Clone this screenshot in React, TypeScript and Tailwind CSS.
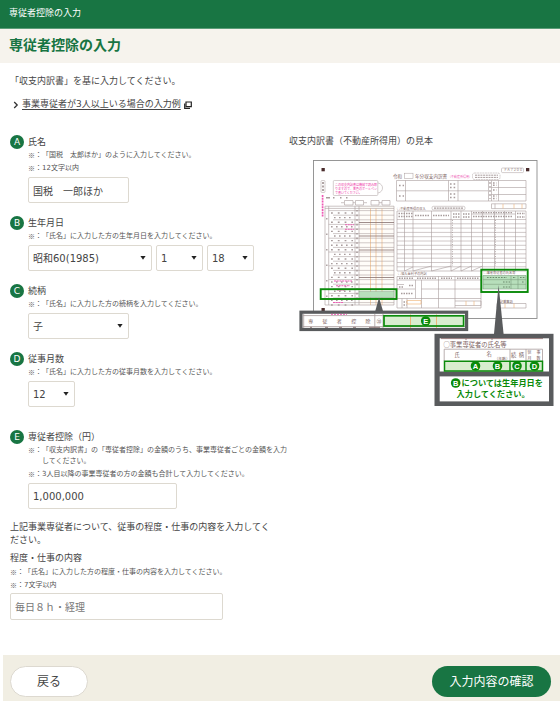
import type { ReactNode } from "react";

const relations = ["子", "配偶者", "父", "母"];
const months = ["12", "11", "10", "9", "8", "7", "6"];

const sampleFont = "'Liberation Sans', 'Noto Sans CJK JP', sans-serif";
const green = "#0a8a0a";
const line = "#a89c9c";

const mainRows = Array.from({ length: 21 }, (_, i) => 210.6 + i * 4.6);
const incomeRows = Array.from({ length: 12 }, (_, i) => 219.5 + i * 4.3);

function Badge({ children }: { children: ReactNode }) {
  return (
    <span className="flex size-3.5 shrink-0 items-center justify-center rounded-full bg-[#187543] text-[9px] leading-none text-white">
      {children}
    </span>
  );
}

function Note({ children }: { children: ReactNode }) {
  return (
    <p className="flex py-px text-[7px] leading-[11px] text-[#555]">
      <span className="w-[7px] shrink-0 font-['Noto_Sans_CJK_JP',sans-serif]">※</span>
      <span className="w-[7px] shrink-0">：</span>
      <span>{children}</span>
    </p>
  );
}

type FieldProps = {
  mark: string;
  label: string;
  htmlFor: string;
  notes: string[];
  children: ReactNode;
};

function Field({ mark, label, htmlFor, notes, children }: FieldProps) {
  return (
    <div className="flex gap-1">
      <Badge>{mark}</Badge>
      <div className="min-w-0 flex-1">
        <label htmlFor={htmlFor} className="block text-[9px] leading-[14px]">
          {label}
        </label>
        {notes.map((note) => (
          <Note key={note}>{note}</Note>
        ))}
        <div className="mt-0.5 flex gap-1">{children}</div>
      </div>
    </div>
  );
}

type SelectProps = {
  id: string;
  options: string[];
  className: string;
  label?: string;
};

function Select({ id, options, className, label }: SelectProps) {
  return (
    <div className={`relative ${className}`}>
      <select
        id={id}
        aria-label={label}
        className="block h-[26px] w-full appearance-none rounded-xs border border-[#ddd9d0] bg-white pl-1 text-[10px] text-[#444]"
      >
        {options.map((option) => (
          <option key={option}>{option}</option>
        ))}
      </select>
      <svg viewBox="0 0 6 4" className="pointer-events-none absolute top-[11px] right-1.5 h-1 w-1.5">
        <path d="M.4 0h5.2L3 3.8z" fill="#222" />
      </svg>
    </div>
  );
}

function Mark({ x, y, children }: { x: number; y: number; children: string }) {
  return (
    <g>
      <circle cx={x} cy={y} r="4.8" fill={green} />
      <text x={x} y={y + 2.7} fontSize="7.5" fontWeight="700" fill="#fff" textAnchor="middle">
        {children}
      </text>
    </g>
  );
}

function FormSample() {
  return (
    <svg
      viewBox="289 155 266 255"
      className="mt-[7px] block w-full"
      fontFamily={sampleFont}
      role="img"
      aria-label="収支内訳書の見本"
    >
      {/* paper */}
      <rect x="313.5" y="160.5" width="223.5" height="158" fill="#fff" stroke="#8c8c8c" strokeWidth="0.9" />
      <g fill="#4a2c2c">
        <rect x="321.5" y="168" width="3.3" height="3.3" />
        <rect x="526" y="168" width="3.3" height="3.3" />
        <rect x="321.5" y="308" width="3.3" height="3.3" />
      </g>

      {/* form title */}
      <g fontSize="4.6" fill="#7d6464">
        <text x="393" y="178">令和</text>
        <text x="415" y="178">年分収支内訳書</text>
        <text x="448" y="177.6" fontSize="3" fill="#ee5bb5">（不動産所得用）</text>
        <text x="504" y="171.4" fontSize="3.1">ＦＡ７２００</text>
      </g>
      <g fill="none" stroke={line} strokeWidth="0.5">
        <rect x="404.5" y="173.2" width="8.5" height="5.3" />
        <rect x="501.5" y="168" width="22" height="4.6" rx="1" />
        <rect x="472.5" y="173" width="27.5" height="6.5" rx="2" strokeDasharray="2 .6" />
        <path d="M475 175.2h23M475 177.4h23" strokeDasharray="2 .7" strokeWidth="1" />
        <rect x="321" y="180.5" width="4" height="12" rx="1" />
        <path d="M323 182v9" strokeDasharray="2 1.5" strokeWidth="1.8" />
        <rect x="333.3" y="180.5" width="44.5" height="15" rx="1" />
        <path d="M378 183c6 1 6 9 0 10" />
      </g>
      <path d="M322.6 195v22" stroke="#ee5bb5" strokeWidth="1.7" strokeDasharray="2 .8" />
      <g fontSize="3" fill="#ee3ba8">
        <text x="335" y="185.5">この収支内訳書は機械で読み取</text>
        <text x="335" y="189.5">りますので、黒色のボールペン</text>
        <text x="335" y="193.5">で書いてください。</text>
      </g>

      {/* address block */}
      <g fill="none" stroke={line} strokeWidth="0.6">
        <path d="M396.5 180.5H526v20.5H396.5zM396.5 190.8H488M405.5 180.5V201M448.5 180.5V201M458 180.5V201M488.5 180.5V201M491.5 180.5V201M498.5 180.5V201M491.5 187.5H526M491.5 194.5H526" />
        <path d="M399 185.5h5M399 196h5M450 184h6M450 187.5h6M450 194h6M450 197.5h6M493 183h4M493 185.3h4M493 190h4M493 196h4M493 198.5h4" strokeDasharray="1.6 2" strokeWidth="1.4" />
        <path d="M490 182v17" strokeDasharray="2 2" strokeWidth="1.2" />
        <path d="M326 197.7h4M333 197.7h1.5M340 197.7h1.5M346 197.7h1.5" strokeWidth="1.4" />
        <path d="M344.5 200.5h8.5v4.5h-8.5zM355.5 200.5h8v4.5h-8zM371 200.5h8v4.5h-8zM382 200.5h8v4.5h-8zM491.5 203.8H526v4.8H491.5zM495 203.8v4.8" />
        <path d="M341 202.7h3M353 202.7h2M364 202.7h3M379 202.7h3" />
      </g>

      {/* main table */}
      <rect x="359" y="206" width="35" height="99" fill="#fffdf9" />
      <g stroke="#efb070" strokeWidth="0.6">
        <path d="M370.5 208.5V305M382 208.5V305M376 208.5V305" />
        <path d="M503 204v4.5M514 204v4.5M522 204v4.5" />
      </g>
      <g fill="none" stroke={line} strokeWidth="0.6">
        <path d="M325 206.2H394V305H325zM328.7 206.2V305M355 206.2V305M359 206.2V305" />
        <path d="M325 208.4H394" />
        <path d="M326.8 218v80" strokeDasharray="1.5 14" strokeWidth="1.4" />
        <path d="M357 210v92" strokeDasharray="1.6 3" strokeWidth="1.6" />
      </g>
      {mainRows.map((y, i) => (
        <g key={y} stroke={line} fill="none">
          <path d={`M${i % 3 === 0 ? 328.7 : 333} ${y}H394`} strokeWidth="0.55" />
          <path
            d={`M${i % 4 === 1 ? 334 : 331} ${y + 2.4}H353`}
            strokeWidth="1.4"
            strokeDasharray={i % 2 ? "1.6 3.4" : "1.8 5"}
          />
        </g>
      ))}
      <path d="M359 222.5H394M359 236H394M359 250H394M359 277.5H394" stroke="#85706f" strokeWidth="0.8" />
      <path d="M345 224.7h9M345 229.3h9M334 281h18M336 285.7h14M337 290h8M333 302.5h10" stroke="#ee5bb5" strokeWidth="1.1" strokeDasharray="2 .7" />

      {/* income table */}
      <g fontSize="3.2" fill="#7d6464">
        <text x="397" y="209.5">◯不動産所得の収入</text>
        <text x="398" y="274.8">◯借入金利子の内訳</text>
        <text x="483.5" y="274">◯事業専従者の氏名等</text>
        <text x="500" y="302.5">記載事項</text>
      </g>
      <rect x="432" y="206.3" width="33" height="3.6" rx="1.5" fill="none" stroke={line} strokeWidth="0.5" />
      <path d="M434 208.1h29" stroke={line} strokeWidth="1.4" strokeDasharray="2 .7" />
      <g fill="none" stroke={line} strokeWidth="0.6">
        <path d="M397 211H526V271H397zM404.5 211V271M413 211V271M431.5 211V271M451 211V271M461 211V271M471.5 211V271M482.5 211V271M494.5 211V271M504.5 211V271M515.5 211V271M471.5 214H515.5" />
        <path d="M452.5 220v46M495.5 220v46" strokeDasharray="1 1.4" strokeWidth="0.8" />
        <path d="M398.5 213.5h14M398.5 216.5h14M415 215.5h14M433 215.5h16M453 214h7M453 217h7M463 214h7M463 217h7M473 212.7h40M473 216.5h40M517 213.5h8M517 217h8" strokeDasharray="1.5 1" strokeWidth="1.3" />
        <path d="M404.5 271l8.5-4M413 271l18.5-5M431.5 271l19.5-5M451 271l10-5M461 271l10.5-5M471.5 271l11-5" />
      </g>
      {incomeRows.map((y) => (
        <path key={y} d={`M397 ${y}H526`} stroke={line} strokeWidth="0.55" />
      ))}

      {/* lower tables */}
      <g fill="none" stroke={line} strokeWidth="0.6">
        <path d="M397 276.5H481V308H397zM397 280H481M397 284.5H404M415.5 280V298.5M421.5 280V308M438.5 276.5V308M455 276.5V308M397 289H415M397 298.5H438.5M402 298.5V308M407 298.5V308M421.5 289H481M438.5 298.5H481M455 301H481V305.5H455M497 303.5H526V308H497z" />
        <path d="M399 278.3h14M417 278.3h20M441 278.3h11M457 278.3h22M399 287h5M409 285.5h4M401 293.5h12M403.5 302h3M403.5 305h3" strokeDasharray="1.5 1" strokeWidth="1.4" />
      </g>
      <path d="M407 300.5H421V304H407zM466 301v4.5M474 301v4.5M505 303.5v4.5M514 303.5v4.5" fill="none" stroke="#efb070" strokeWidth="0.6" />

      {/* highlighted cells */}
      <rect x="359" y="291.5" width="35" height="6" fill="#b7dfbb" stroke="#89a889" strokeWidth="0.5" />
      <rect x="320.7" y="289.2" width="75.8" height="9.8" fill="none" stroke={green} strokeWidth="1.9" />
      <rect x="483" y="275.5" width="43" height="13.5" fill="#b7dfbb" />
      <path d="M483 275.5H526V289H483zM483 279.7H526M483 284.3H526M511 275.5V289M518 275.5V289" fill="none" stroke="#7da080" strokeWidth="0.6" />
      <path d="M487 277.5h20M513 277.5h3M520 277.5h5M503 282h7M503 287h7M522 282h2" stroke="#6d8a6d" strokeWidth="1.1" strokeDasharray="1.6 1.2" />
      <rect x="481.3" y="269.7" width="46.4" height="22.3" fill="none" stroke={green} strokeWidth="1.9" />

      {/* deduction call-out */}
      <path d="M379 297.5L383.3 312H375z" fill="#595b5d" />
      <rect x="301" y="312.2" width="165.6" height="17.3" fill="#fff" stroke="#595b5d" strokeWidth="3.2" />
      <path d="M303 315.6H465M303 326.6H465M303.7 314V328M374.8 314V328M383 314V328" fill="none" stroke={line} strokeWidth="0.8" />
      <path d="M331 314.4h16" stroke="#ee5bb5" strokeWidth="0.9" strokeDasharray="2 1" />
      <path d="M310 327.4h2M325 327.4h3M339 327.4h3M353 327.4h3M369 327.4h11" stroke="#8b7474" strokeWidth="0.9" />
      <g fontSize="5" fill="#7d6464" textAnchor="middle">
        <text x="310.7" y="323">専</text>
        <text x="325" y="323">従</text>
        <text x="339.3" y="323">者</text>
        <text x="353.7" y="323">控</text>
        <text x="368" y="323">除</text>
        <text x="379" y="323">⑳</text>
      </g>
      <rect x="384" y="315.8" width="79.6" height="10.2" fill="#d8edcf" />
      <path d="M410.5 314.5V328M436.5 314.5V328" stroke="#efb070" strokeWidth="0.9" />
      <rect x="384" y="315.8" width="79.6" height="10.2" fill="none" stroke={green} strokeWidth="1.7" />
      <Mark x={425.7} y={321}>E</Mark>

      {/* dependants call-out */}
      <path d="M498.6 285L503.8 336H493.8z" fill="#595b5d" />
      <rect x="434.5" y="333.8" width="119" height="72.2" fill="#595b5d" />
      <rect x="439.7" y="338.3" width="109.3" height="33.2" fill="#fff" />
      <rect x="439.7" y="376.4" width="109.3" height="25" fill="#fff" />
      <path d="M441 338.6H543M466 338.3v1.8M492 338.3v1.8" stroke="#8b6868" strokeWidth="0.8" />
      <text x="443.5" y="347.2" fontSize="6.3" fill="#7d6464">◯事業専従者の氏名等</text>
      <path d="M444.2 349.2H542.5V361M444.2 349.2V361M510 349.2V361M526 349.2V361" fill="none" stroke={line} strokeWidth="0.8" />
      <g fontSize="5.2" fill="#7d6464">
        <text x="454.5" y="357">氏</text>
        <text x="486.5" y="355.6">名</text>
        <text x="494.5" y="360.2" fontSize="3.8">（年齢）</text>
        <text x="511" y="357">続</text>
        <text x="518.8" y="357">柄</text>
        <text x="527.5" y="354.4" fontSize="4">従</text>
        <text x="536.5" y="354.4" fontSize="4">事</text>
        <text x="527.5" y="359.9" fontSize="4">月</text>
        <text x="536.5" y="359.9" fontSize="4">数</text>
      </g>
      <path d="M444.5 361.2H542.5V371H444.5zM510 361.2V371M526 361.2V371" fill="#d8edcf" stroke={green} strokeWidth="1.5" />
      <Mark x={475.5} y={366}>A</Mark>
      <Mark x={497.5} y={366}>B</Mark>
      <Mark x={517} y={366}>C</Mark>
      <Mark x={534.5} y={366}>D</Mark>
      <Mark x={455.7} y={383}>B</Mark>
      <g fontSize="8.2" fontWeight="700" fill={green}>
        <text x="461.5" y="385.8">については生年月日を</text>
        <text x="456.5" y="396.8">入力してください。</text>
      </g>
    </svg>
  );
}

export default function App() {
  return (
    <div lang="ja" className="bg-white font-['DejaVu_Sans','Noto_Sans_CJK_JP',sans-serif] text-[9px] leading-[13px] text-[#444]">
      <header className="border-b border-[#5b9d78] bg-[#187543] px-[9px] pt-[7px] pb-2 text-white">専従者控除の入力</header>
      <div className="bg-[#f6f3ed] px-[9px] pt-1.5 pb-2">
        <h1 className="text-sm font-bold text-[#187543]">専従者控除の入力</h1>
      </div>

      <main className="pt-3 pr-[5px] pb-[35px] pl-2.5">
        <p>「収支内訳書」を基に入力してください。</p>
        <p className="mt-2.5 flex items-center gap-[3px] pl-[3px]">
          <svg viewBox="0 0 6 8" className="h-2 w-1.5" fill="none" stroke="#333" strokeWidth="1.3">
            <path d="M1.2 1l3 3-3 3" />
          </svg>
          <a href="#example" className="underline underline-offset-2">
            事業専従者が3人以上いる場合の入力例
          </a>
          <svg viewBox="0 0 8 8" className="size-2" fill="none" stroke="#222" strokeWidth="1.2">
            <path d="M2 1h5.3v4.7H2z" />
            <path d="M.7 2.5v4.8H6" />
          </svg>
        </p>

        <div className="mt-6 grid grid-cols-[277fr_266fr] gap-0.5">
          <form id="deduction">
            <div className="flex flex-col gap-[13px]">
              <Field
                mark="A"
                label="氏名"
                htmlFor="name"
                notes={["「国税　太郎ほか」のように入力してください。", "12文字以内"]}
              >
                <input
                  id="name"
                  defaultValue="国税　一郎ほか"
                  className="h-[26px] w-[101px] rounded-xs border border-[#ddd9d0] px-1 text-[10px]"
                />
              </Field>
              <Field mark="B" label="生年月日" htmlFor="year" notes={["「氏名」に入力した方の生年月日を入力してください。"]}>
                <Select id="year" options={["昭和60(1985)", "昭和61(1986)"]} className="w-[124px]" />
                <Select id="month" label="月" options={["1", "2", "3"]} className="w-[47px]" />
                <Select id="day" label="日" options={["18", "19", "20"]} className="w-[47px]" />
              </Field>
              <Field mark="C" label="続柄" htmlFor="relation" notes={["「氏名」に入力した方の続柄を入力してください。"]}>
                <Select id="relation" options={relations} className="w-[101px]" />
              </Field>
              <Field mark="D" label="従事月数" htmlFor="months" notes={["「氏名」に入力した方の従事月数を入力してください。"]}>
                <Select id="months" options={months} className="w-[47px]" />
              </Field>
              <div className="mt-2.5">
                <Field
                  mark="E"
                  label="専従者控除（円）"
                  htmlFor="amount"
                  notes={[
                    "「収支内訳書」の「専従者控除」の金額のうち、事業専従者ごとの金額を入力してください。",
                    "3人目以降の事業専従者の方の金額も合計して入力してください。",
                  ]}
                >
                  <input
                    id="amount"
                    inputMode="numeric"
                    defaultValue="1,000,000"
                    className="h-[26px] w-[149px] rounded-xs border border-[#ddd9d0] px-1 text-[10px]"
                  />
                </Field>
              </div>
            </div>

            <p className="mt-3 pr-3">上記事業専従者について、従事の程度・仕事の内容を入力してください。</p>
            <label htmlFor="work" className="mt-[5px] mb-px block">
              程度・仕事の内容
            </label>
            <Note>「氏名」に入力した方の程度・仕事の内容を入力してください。</Note>
            <Note>7文字以内</Note>
            <input
              id="work"
              defaultValue="毎日８ｈ・経理"
              className="mt-px block h-[27px] w-[213px] rounded-xs border border-[#ddd9d0] px-1 text-[10px] text-[#777]"
            />
          </form>

          <section>
            <h2>収支内訳書（不動産所得用）の見本</h2>
            <FormSample />
          </section>
        </div>
      </main>

      <footer className="ml-[3px] flex justify-between bg-[#f1eee3] pt-[11px] pr-[9px] pb-1 pl-[7px] text-xs">
        <button type="button" className="h-[31px] w-[78px] rounded-full border border-[#ddd9d0] bg-white">
          戻る
        </button>
        <button type="submit" form="deduction" className="h-[31px] w-[119px] rounded-full bg-[#187543] text-white">
          入力内容の確認
        </button>
      </footer>
    </div>
  );
}
